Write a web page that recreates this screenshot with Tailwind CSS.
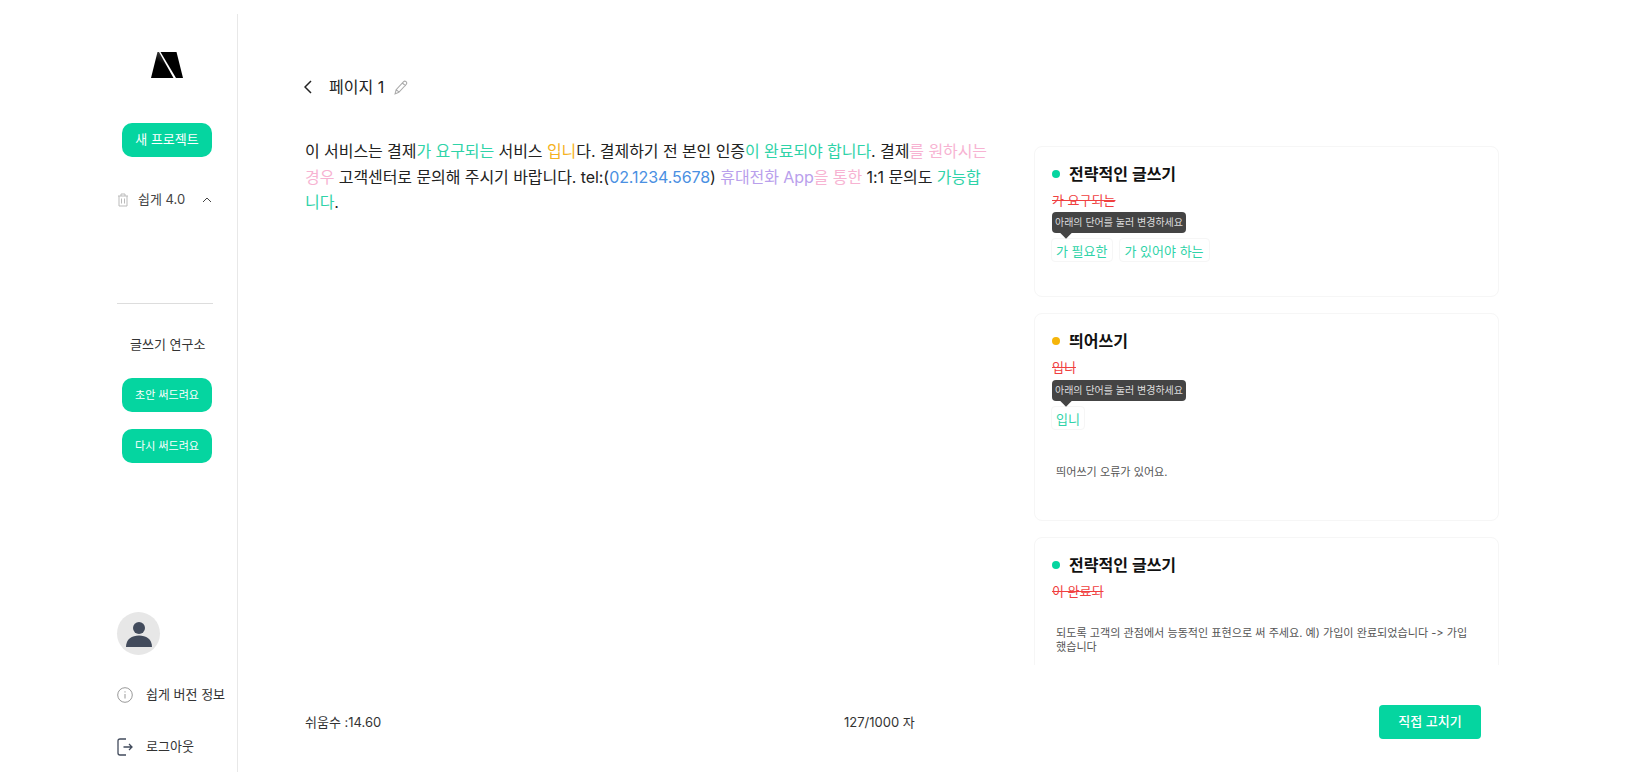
<!DOCTYPE html>
<html lang="ko">

<head>
  <meta charset="UTF-8">
  <meta name="viewport" content="width=device-width, initial-scale=1.0">
  <title>쉽게 4.0</title>
  <script src="https://cdn.jsdelivr.net/npm/@tailwindcss/browser@4"></script>
</head>

<body class="bg-white text-[#222] font-['Inter','Noto_Sans_CJK_KR',sans-serif] overflow-hidden">
  <div class="flex h-[772px] w-[1652px]">
    <!-- sidebar -->
    <aside class="w-[238px] h-[758px] mt-[14px] border-r border-[#e8e8e8] pl-[117px] flex flex-col shrink-0">
      <svg class="w-[32px] h-[26px] ml-[34px] mt-[38px]" viewBox="0 0 32 26">
        <defs>
          <linearGradient id="logoFill" x1="0.7" y1="0" x2="0.2" y2="1">
            <stop offset="0" stop-color="#555" />
            <stop offset="0.45" stop-color="#000" />
          </linearGradient>
        </defs>
        <path d="M6.500 0H8L22.500 26H0Z" fill="url(#logoFill)" />
        <path d="M9.500 0H25.500L32 26H25Z" fill="#000" />
      </svg>
      <button class="mt-[45px] ml-[5px] w-[90px] h-[34px] rounded-[10px] bg-[#05d5a0] text-white text-[13px]">새 프로젝트</button>
      <div class="mt-[34px] flex items-center h-[18px] text-[13px] text-[#444]">
        <svg class="w-[12px] h-[14px] text-[#bbb]" viewBox="0 0 12 14" fill="none" stroke="currentColor">
          <path d="M1 3h10M4 3V1h4v2M2 3v10h8V3M4.500 5.500v5M7.500 5.500v5" />
        </svg>
        <span class="ml-[9px]">쉽게 4.0</span>
        <svg class="w-[10px] h-[6px] ml-[17px] text-[#444]" viewBox="0 0 10 6" fill="none" stroke="currentColor">
          <path d="M1 5l4-4 4 4" />
        </svg>
      </div>
      <div class="mt-[94px] w-[96px] border-t border-[#ddd]"></div>
      <div class="mt-[31px] ml-[13px] text-[13px] leading-[18px] text-[#333]">글쓰기 연구소</div>
      <button class="mt-[25px] ml-[5px] w-[90px] h-[34px] rounded-[10px] bg-[#05d5a0] text-white text-[11px]">초안 써드려요</button>
      <button class="mt-[17px] ml-[5px] w-[90px] h-[34px] rounded-[10px] bg-[#05d5a0] text-white text-[11px]">다시 써드려요</button>
      <div class="mt-[149px] w-[43px] h-[43px] rounded-full bg-[#e7e7e7] flex items-center justify-center">
        <svg class="w-[26px] h-[26px]" viewBox="0 0 26 26" fill="#424b5c">
          <circle cx="13" cy="7" r="6" />
          <path d="M0 26C0 18 6 14.500 13 14.500S26 18 26 26Z" />
        </svg>
      </div>
      <div class="mt-[30px] flex items-center h-[20px] text-[13px] text-[#333]">
        <svg class="w-[16px] h-[16px] text-[#999]" viewBox="0 0 16 16" fill="none" stroke="currentColor">
          <circle cx="8" cy="8" r="7.300" />
          <path d="M8 7v4.500M8 4.300v1.200" />
        </svg>
        <span class="ml-[13px] whitespace-nowrap">쉽게 버전 정보</span>
      </div>
      <div class="mt-[32px] flex items-center h-[20px] text-[13px] text-[#333]">
        <svg class="w-[16px] h-[18px] text-[#424b5c]" viewBox="0 0 16 18" fill="none" stroke="currentColor" stroke-width="1.300">
          <path d="M9 1H3Q1 1 1 3v12Q1 17 3 17H9M6.500 9H15M12 6l3 3-3 3" />
        </svg>
        <span class="ml-[13px]">로그아웃</span>
      </div>
    </aside>

    <!-- main -->
    <main class="flex-1 flex flex-col min-w-0">
      <div class="flex flex-1 min-h-0">
        <!-- editor -->
        <section class="w-[796px] pl-[67px] pr-[45px] shrink-0">
          <div class="mt-[76px] h-[22px] flex items-center">
            <svg class="w-[8px] h-[14px] -ml-[1px] text-[#222]" viewBox="0 0 8 14" fill="none" stroke="currentColor" stroke-width="1.500">
              <path d="M7 1L1 7l6 6" />
            </svg>
            <span class="ml-[17px] text-[16px] text-[#222]">페이지 1</span>
            <svg class="w-[15px] h-[15px] ml-[10px] text-[#aaa]" viewBox="0 0 14 14" fill="none" stroke="currentColor">
              <path d="M1 13l1-4 7-7.500q1-1 2.200 0t.3 2.500L4.500 11.500ZM2 9l3 2.500M8 3l3 2.500" />
            </svg>
          </div>
          <p class="mt-[41px] text-[16px] tracking-[-0.07px] leading-[25.500px] text-[#222]">이 서비스는 결제<span class="text-[#2fd3a8]">가 요구되는</span> 서비스 <span class="text-[#f5b222]">입니</span>다. 결제하기 전 본인 인증<span class="text-[#2fd3a8]">이 완료되야 합니다</span>. 결제<span class="text-[#f7b3d2]">를 원하시는 경우</span> 고객센터로 문의해 주시기 바랍니다. tel:(<span class="text-[#4a90e2]">02.1234.5678</span>) <span class="text-[#b9a0ec]">휴대전화 App</span><span class="text-[#f7b3d2]">을 통한</span> 1:1 문의도 <span class="text-[#2fd3a8]">가능합니다</span>.</p>
        </section>

        <!-- suggestion cards -->
        <section class="w-[465px] pt-[146px] h-[665px] overflow-hidden shrink-0 flex flex-col gap-[16px]">
          <div class="h-[151px] shrink-0 rounded-lg border border-[#f6f6f6] px-[17px] pt-[16px]">
            <div class="flex items-center h-[22px]">
              <span class="w-[8px] h-[8px] rounded-full bg-[#05d5a0]"></span>
              <h2 class="ml-[9px] text-[16px] font-semibold text-[#111]">전략적인 글쓰기</h2>
            </div>
            <div class="mt-[6px] text-[13px] leading-[18px] text-[#f04040] line-through">가 요구되는</div>
            <div class="relative mt-[3px] w-[134px] h-[21px] rounded bg-[#444] text-[#ddd] text-[10px] leading-[21px] text-center whitespace-nowrap">아래의 단어를 눌러 변경하세요
              <span class="absolute left-[10px] -bottom-[4px] w-[8px] h-[8px] rotate-45 bg-[#444]"></span>
            </div>
            <div class="mt-[5px] -ml-[1px] flex gap-[6px]">
              <span class="px-[4px] h-[24px] leading-[24px] rounded border border-[#f6f6f6] text-[13px] text-[#2fd3a8]">가 필요한</span>
              <span class="px-[5px] h-[24px] leading-[24px] rounded border border-[#f6f6f6] text-[13px] text-[#2fd3a8]">가 있어야 하는</span>
            </div>
          </div>
          <div class="h-[208px] shrink-0 rounded-lg border border-[#f6f6f6] px-[17px] pt-[16px]">
            <div class="flex items-center h-[22px]">
              <span class="w-[8px] h-[8px] rounded-full bg-[#f5b50a]"></span>
              <h2 class="ml-[9px] text-[16px] font-semibold text-[#111]">띄어쓰기</h2>
            </div>
            <div class="mt-[6px] text-[13px] leading-[18px] text-[#f04040] line-through">입니</div>
            <div class="relative mt-[4px] w-[134px] h-[21px] rounded bg-[#444] text-[#ddd] text-[10px] leading-[21px] text-center whitespace-nowrap">아래의 단어를 눌러 변경하세요
              <span class="absolute left-[10px] -bottom-[4px] w-[8px] h-[8px] rotate-45 bg-[#444]"></span>
            </div>
            <div class="mt-[5px] -ml-[1px] flex gap-[6px]">
              <span class="px-[4px] h-[24px] leading-[24px] rounded border border-[#f6f6f6] text-[13px] text-[#2fd3a8]">입니</span>
            </div>
            <p class="mt-[35px] px-[4px] text-[11.100px] leading-[15px] text-[#555]">띄어쓰기 오류가 있어요.</p>
          </div>
          <div class="h-[200px] shrink-0 rounded-lg border border-[#f6f6f6] px-[17px] pt-[16px]">
            <div class="flex items-center h-[22px]">
              <span class="w-[8px] h-[8px] rounded-full bg-[#05d5a0]"></span>
              <h2 class="ml-[9px] text-[16px] font-semibold text-[#111]">전략적인 글쓰기</h2>
            </div>
            <div class="mt-[6px] text-[13px] leading-[18px] text-[#f04040] line-through">이 완료되</div>
            <p class="mt-[26px] px-[4px] break-keep text-[11.100px] leading-[14px] text-[#555]">되도록 고객의 관점에서 능동적인 표현으로 써 주세요. 예) 가입이 완료되었습니다 -&gt; 가입 했습니다</p>
          </div>
        </section>
      </div>

      <!-- footer -->
      <footer class="h-[107px] shrink-0 pl-[67px] pt-[40px] flex items-start text-[13px] text-[#333]">
        <div class="w-[539px] h-[34px] leading-[34px]">쉬움수 :14.60</div>
        <div class="w-[535px] h-[34px] leading-[34px]">127/1000 자</div>
        <button class="w-[102px] h-[34px] rounded bg-[#05d5a0] text-white text-[13px] font-medium">직접 고치기</button>
      </footer>
    </main>
  </div>
</body>

</html>
